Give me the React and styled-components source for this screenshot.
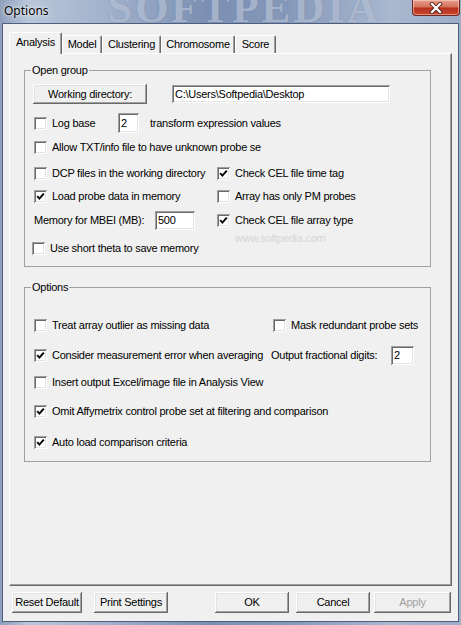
import React from "react";
import styled, { createGlobalStyle } from "styled-components";

// --- Global ---
const GlobalStyle = createGlobalStyle`
  html, body {
    margin: 0;
    padding: 0;
    width: 461px;
    height: 625px;
    overflow: hidden;
    background: #8fa2bf;
  }
  * { box-sizing: border-box; }
`;

// --- Window frame ---
const Window = styled.div`
  width: 461px;
  height: 625px;
  display: flex;
  flex-direction: column;
  background: linear-gradient(90deg, #8d9fbc 0%, #b9c6da 6%, #a3b3cc 22%, #7a8fb2 45%, #8498b9 62%, #a9b8cf 85%, #9cadc7 100%);
  font-family: "Liberation Sans", Arial, sans-serif;
  font-size: 11px;
  letter-spacing: -0.25px;
  color: #000;
`;

const TitleBar = styled.div`
  position: relative;
  height: 23px;
  display: flex;
  align-items: flex-start;
  justify-content: space-between;
  padding-left: 4px;
  overflow: hidden;
`;

const Title = styled.span`
  position: relative;
  z-index: 1;
  margin-top: 2px;
  font-family: "Noto Sans", "Open Sans", sans-serif;
  font-size: 12px;
  line-height: 17px;
  letter-spacing: 0;
  color: #000;
  text-shadow: 0 0 6px rgba(255, 255, 255, 0.9), 0 0 2px rgba(255, 255, 255, 0.8);
`;

const Watermark = styled.span`
  position: absolute;
  left: 108px;
  top: -14px;
  font-family: "Liberation Serif", serif;
  font-weight: 700;
  font-size: 43px;
  line-height: 1;
  letter-spacing: 3px;
  color: rgba(225, 232, 243, 0.5);
  text-shadow: 0 0 1px rgba(80, 100, 140, 0.5);
  pointer-events: none;
`;

const CloseButton = styled.div`
  position: relative;
  z-index: 1;
  width: 48px;
  height: 16px;
  margin-right: 1px;
  border: 1px solid #6b2a24;
  border-top: none;
  border-radius: 0 0 4px 4px;
  background: linear-gradient(180deg, #e6a08f 0%, #d6705c 45%, #b8321f 55%, #c9452e 100%);
  box-shadow: inset 0 0 0 1px rgba(255, 220, 210, 0.5);
  display: flex;
  align-items: center;
  justify-content: center;

  svg { display: block; }
`;

// --- Client area ---
const Client = styled.div`
  flex: 1;
  margin: 0 2px 3px 2px;
  border: 1px solid #4d5f7d;
  background: #f0f0f0;
  display: flex;
  flex-direction: column;
  padding: 8px 6px 0 6px;
`;

const TabRow = styled.div`
  height: 21px;
  display: flex;
  align-items: flex-end;
  position: relative;
  z-index: 2;
`;

const Tab = styled.div`
  width: ${(p) => p.$w}px;
  height: ${(p) => (p.$active ? 22 : 18)}px;
  margin-bottom: ${(p) => (p.$active ? -1 : 0)}px;
  padding-bottom: ${(p) => (p.$active ? 2 : 0)}px;
  background: #f0f0f0;
  border-top: 1px solid #fff;
  border-left: 1px solid #fff;
  border-right: 1px solid #696969;
  border-radius: 2px 2px 0 0;
  box-shadow: inset -1px 0 #a0a0a0;
  display: flex;
  align-items: center;
  justify-content: center;
  white-space: nowrap;
  line-height: 13px;
`;

const Panel = styled.div`
  flex: 1;
  border-top: 1px solid #fff;
  border-left: 1px solid #fff;
  border-right: 1px solid #696969;
  border-bottom: 1px solid #696969;
  box-shadow: inset -1px -1px #a0a0a0;
  padding: 10px 20px 0 14px;
  display: flex;
  flex-direction: column;
`;

const Group = styled.fieldset`
  margin: ${(p) => p.$mt || 0}px 0 0 0;
  padding: 0;
  border: 1px solid #a0a0a0;
  min-width: 0;
`;

const Legend = styled.legend`
  margin-left: 6px;
  padding: 0 1px;
  line-height: 13px;
  font-size: 11px;
`;

const GroupBody = styled.div`
  padding: ${(p) => p.$pad};
  display: flex;
  flex-direction: column;
`;

const Row = styled.div`
  display: flex;
  align-items: center;
  height: ${(p) => p.$h || 22}px;
  margin-top: ${(p) => p.$mt || 0}px;
  margin-left: ${(p) => p.$ml || 0}px;
`;

const TwoCol = styled.div`
  display: grid;
  grid-template-columns: ${(p) => p.$left}px 1fr;
  grid-template-rows: ${(p) => p.$rows};
  margin-top: ${(p) => p.$mt || 0}px;
  align-items: center;
`;

const Cell = styled.div`
  position: relative;
  display: flex;
  align-items: center;
  height: 100%;
  padding-left: ${(p) => p.$pl || 0}px;
`;

const Text = styled.span`
  display: inline-block;
  white-space: nowrap;
  line-height: 13px;
  width: ${(p) => (p.$w ? `${p.$w}px` : "auto")};
  margin-left: ${(p) => p.$ml || 0}px;
`;

const Faint = styled.span`
  position: absolute;
  top: 100%;
  left: 18px;
  line-height: 13px;
  color: #d6d6d6;
  white-space: nowrap;
`;

// --- Controls ---
const Box = styled.span`
  flex: none;
  width: 13px;
  height: 13px;
  background: #fff;
  box-shadow: inset 1px 1px #a0a0a0, inset -1px -1px #fff, inset 2px 2px #696969, inset -2px -2px #e3e3e3;
  display: inline-flex;
  margin-right: 5px;

  svg { display: block; }
`;

const Input = styled.div`
  flex: none;
  width: ${(p) => p.$w}px;
  height: ${(p) => p.$h || 19}px;
  margin-left: ${(p) => p.$ml || 0}px;
  background: #fff;
  box-shadow: inset 1px 1px #a0a0a0, inset -1px -1px #fff, inset 2px 2px #696969, inset -2px -2px #e3e3e3;
  padding: 0 3px;
  display: flex;
  align-items: center;
  white-space: nowrap;
  overflow: hidden;
  line-height: 13px;
`;

const Button = styled.div`
  flex: none;
  width: ${(p) => p.$w}px;
  height: ${(p) => p.$h || 21}px;
  margin-left: ${(p) => p.$ml || 0}px;
  background: #f0f0f0;
  box-shadow: inset -1px -1px #696969, inset 1px 1px #fff, inset -2px -2px #a0a0a0, inset 2px 2px #e3e3e3;
  display: flex;
  align-items: center;
  justify-content: center;
  white-space: nowrap;
  line-height: 13px;
  color: ${(p) => (p.$disabled ? "#a0a0a0" : "#000")};
`;

const Spacer = styled.div`
  flex: 1;
`;

const Footer = styled.div`
  display: flex;
  align-items: center;
  margin-top: 6px;
  padding: 0 1px 8px 3px;
`;

function Check({ checked, label, width }) {
  return (
    <>
      <Box>
        {checked && (
          <svg width="13" height="13" viewBox="0 0 13 13">
            <path d="M3.2 6.2 L5.4 8.6 L9.8 3.6" fill="none" stroke="#000" strokeWidth="1.9" />
          </svg>
        )}
      </Box>
      <Text $w={width}>{label}</Text>
    </>
  );
}

const tabs = [
  { name: "Analysis", w: 53, active: true },
  { name: "Model", w: 40 },
  { name: "Clustering", w: 59 },
  { name: "Chromosome", w: 74 },
  { name: "Score", w: 41 },
];

export default function App() {
  return (
    <>
      <GlobalStyle />
      <Window>
        <TitleBar>
          <Watermark>SOFTPEDIA</Watermark>
          <Title>Options</Title>
          <CloseButton>
            <svg width="14" height="12" viewBox="0 0 14 12">
              <path d="M3 2 L11 10 M11 2 L3 10" stroke="#5a2a24" strokeWidth="4" strokeLinecap="square" />
              <path d="M3 2 L11 10 M11 2 L3 10" stroke="#fff" strokeWidth="2.2" strokeLinecap="square" />
            </svg>
          </CloseButton>
        </TitleBar>

        <Client>
          <TabRow>
            {tabs.map((t) => (
              <Tab key={t.name} $w={t.w} $active={t.active}>
                {t.name}
              </Tab>
            ))}
          </TabRow>

          <Panel>
            <Group>
              <Legend>Open group</Legend>
              <GroupBody $pad="7px 9px 11px 9px">
                <Row $h={20} $ml={-1}>
                  <Button $w={114} $h={20}>Working directory:</Button>
                  <Input $w={218} $h={18} $ml={25}>C:\Users\Softpedia\Desktop</Input>
                </Row>
                <Row $h={20} $mt={9}>
                  <Check label="Log base" width={66} />
                  <Input $w={21} $h={20}>2</Input>
                  <Text $ml={11}>transform expression values</Text>
                </Row>
                <Row $h={14} $mt={7}>
                  <Check label="Allow TXT/info file to have unknown probe se" />
                </Row>
                <TwoCol $left={183} $rows="22px 24px 24px" $mt={8}>
                  <Cell>
                    <Check label="DCP files in the working directory" />
                  </Cell>
                  <Cell>
                    <Check checked label="Check CEL file time tag" />
                  </Cell>
                  <Cell>
                    <Check checked label="Load probe data in memory" />
                  </Cell>
                  <Cell>
                    <Check label="Array has only PM probes" />
                  </Cell>
                  <Cell>
                    <Text $w={121}>Memory for MBEI (MB):</Text>
                    <Input $w={40}>500</Input>
                  </Cell>
                  <Cell>
                    <Check checked label="Check CEL file array type" />
                    <Faint>www.softpedia.com</Faint>
                  </Cell>
                </TwoCol>
                <Row $h={14} $mt={9} $ml={-2}>
                  <Check label="Use short theta to save memory" />
                </Row>
              </GroupBody>
            </Group>

            <Group $mt={14}>
              <Legend>Options</Legend>
              <GroupBody $pad="20px 9px 8px 9px">
                <TwoCol $left={237} $rows="22px">
                  <Cell>
                    <Check label="Treat array outlier as missing data" />
                  </Cell>
                  <Cell $pl={2}>
                    <Check label="Mask redundant probe sets" />
                  </Cell>
                </TwoCol>
                <TwoCol $left={237} $rows="22px" $mt={8}>
                  <Cell>
                    <Check checked label="Consider measurement error when averaging" />
                  </Cell>
                  <Cell>
                    <Text $w={120}>Output fractional digits:</Text>
                    <Input $w={23}>2</Input>
                  </Cell>
                </TwoCol>
                <Row $mt={5}>
                  <Check label="Insert output Excel/image file in Analysis View" />
                </Row>
                <Row $mt={7}>
                  <Check checked label="Omit Affymetrix control probe set at filtering and comparison" />
                </Row>
                <Row $mt={9}>
                  <Check checked label="Auto load comparison criteria" />
                </Row>
              </GroupBody>
            </Group>
            <Spacer />
          </Panel>

          <Footer>
            <Button $w={70}>Reset Default</Button>
            <Button $w={74} $ml={12}>Print Settings</Button>
            <Spacer />
            <Button $w={74}>OK</Button>
            <Button $w={74} $ml={7}>Cancel</Button>
            <Button $w={77} $ml={4} $disabled>Apply</Button>
          </Footer>
        </Client>
      </Window>
    </>
  );
}
